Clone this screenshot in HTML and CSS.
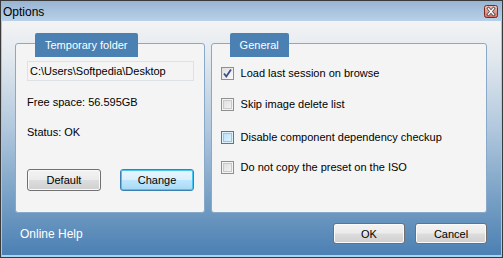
FILE: index.html
```html
<!DOCTYPE html>
<html>
<head>
<meta charset="utf-8">
<link rel="stylesheet" href="styles.css">
</head>
<body>
<div class="window">
  <div class="titlebar">
    <span class="title">Options</span>
    <span class="close">
      <svg width="14" height="13" viewBox="0 0 14 13">
        <defs>
          <linearGradient id="cg" x1="0" y1="0" x2="0" y2="1">
            <stop offset="0" stop-color="#f2c3bb"/>
            <stop offset="1" stop-color="#d36f62"/>
          </linearGradient>
        </defs>
        <rect x="0.5" y="0.5" width="13" height="12" rx="2" fill="url(#cg)" stroke="#7a2a22"/>
        <path d="M4.5 3.5 L9.5 9.5 M9.5 3.5 L4.5 9.5" stroke="#4a4a4a" stroke-width="3" stroke-linecap="square"/>
        <path d="M4.5 3.5 L9.5 9.5 M9.5 3.5 L4.5 9.5" stroke="#ffffff" stroke-width="1.4" stroke-linecap="square"/>
      </svg>
    </span>
  </div>
  <div class="client">
    <div class="panels">
      <div class="panel panel-left">
        <div class="tab">Temporary folder</div>
        <div class="pathbox">C:\Users\Softpedia\Desktop</div>
        <div class="info info-free">Free space: 56.595GB</div>
        <div class="info info-status">Status: OK</div>
        <div class="btnrow">
          <button class="btn">Default</button>
          <button class="btn btn-focus">Change</button>
        </div>
      </div>
      <div class="panel panel-right">
        <div class="tab">General</div>
        <label class="check row1"><span class="box checked">
          <svg width="11" height="11" viewBox="0 0 11 11"><path d="M2 5.5 L4.3 8.5 L9 1.5" fill="none" stroke="#3c4f8a" stroke-width="1.8"/></svg>
        </span>Load last session on browse</label>
        <label class="check row2"><span class="box"></span>Skip image delete list</label>
        <label class="check row3"><span class="box hover"></span>Disable component dependency checkup</label>
        <label class="check row4"><span class="box"></span>Do not copy the preset on the ISO</label>
      </div>
    </div>
    <div class="footer">
      <span class="help">Online Help</span>
      <div class="footer-btns">
        <button class="btn">OK</button>
        <button class="btn">Cancel</button>
      </div>
    </div>
  </div>
</div>
</body>
</html>
```
FILE: styles.css
```css
* { box-sizing: border-box; }
html, body { margin: 0; padding: 0; }
body {
  font-family: "Liberation Sans", Arial, sans-serif;
  font-size: 11px;
  color: #000;
  background: #fff;
}
.window {
  width: 503px;
  height: 258px;
  border: 1px solid #3a3a3a;
  display: flex;
  flex-direction: column;
  background: #a9c6e0;
}
.titlebar {
  height: 20px;
  display: flex;
  align-items: center;
  justify-content: space-between;
  padding: 0 4px 0 2px;
  background: linear-gradient(to bottom, #98b4d2 0%, #a9c3de 50%, #b8d0e8 100%);
}
.title {
  font-size: 12px;
  color: #000;
  padding-top: 1px;
}
.close {
  display: flex;
  margin-top: 1px;
}
.client {
  flex: 1;
  display: flex;
  flex-direction: column;
  margin: 0 1px 0 1px;
  padding: 12px 14px 0 13px;
  background: linear-gradient(to bottom, #f2f3f4 0%, #e3e9ef 15%, #b3c9de 45%, #7fa5c8 72%, #4b80b3 100%);
  border-bottom: 2px solid #a3d8f2;
}
.panels {
  display: flex;
  gap: 6px;
}
.panel {
  position: relative;
  margin-top: 10px;
  height: 170px;
  background: #f4f4f4;
  border: 1px solid #89a9c9;
  border-radius: 3px;
}
.panel-left {
  width: 190px;
  display: flex;
  flex-direction: column;
  padding: 17px 0 21px 11px;
}
.panel-right {
  width: 277px;
  padding: 22px 0 0 9px;
}
.tab {
  position: absolute;
  top: -11px;
  left: 19px;
  height: 24px;
  padding: 0 10px;
  display: flex;
  align-items: center;
  background: #4a80b2;
  color: #fff;
  border-radius: 2px 2px 0 0;
  font-size: 11px;
}
.panel-right .tab { left: 18px; }
.pathbox {
  width: 167px;
  height: 20px;
  border: 1px solid #dde2e8;
  padding: 0 0 0 2px;
  line-height: 18px;
  background: #f4f4f4;
}
.info { line-height: 14px; }
.info-free { margin-top: 14px; }
.info-status { margin-top: 16px; }
.btnrow {
  margin-top: auto;
  display: flex;
  gap: 19px;
}
.btn {
  font-family: "Liberation Sans", Arial, sans-serif;
  font-size: 11px;
  font-weight: normal;
  color: #000;
  width: 74px;
  height: 22px;
  padding: 0;
  border: 1px solid #707070;
  border-radius: 3px;
  background: linear-gradient(to bottom, #f3f3f3 0%, #ebebeb 48%, #dddddd 52%, #cfcfcf 100%);
  box-shadow: inset 0 0 0 1px #fafafa;
}
.btn-focus {
  border-color: #3c7fb1;
  box-shadow: inset 0 0 0 1px #48c6f4;
  background: linear-gradient(to bottom, #eaf6fd 0%, #d9f0fc 48%, #bee6fd 52%, #a7d9f5 100%);
}
.check {
  display: flex;
  align-items: center;
  gap: 7px;
  line-height: 14px;
  height: 14px;
}
.row2 { margin-top: 17px; }
.row3 { margin-top: 19px; }
.row4 { margin-top: 16px; }
.box {
  width: 13px;
  height: 13px;
  border: 1px solid #8e8f8f;
  background: linear-gradient(135deg, #dcdcdc 0%, #f6f6f6 100%);
  box-shadow: inset 0 0 0 1px #f4f4f4, inset 0 0 0 2px #c9c9c9;
  display: flex;
  align-items: center;
  justify-content: center;
}
.box.checked {
  box-shadow: none;
  background: linear-gradient(135deg, #dedede 0%, #fbfbfb 100%);
}
.box.hover {
  border-color: #3c7fb1;
  background: linear-gradient(135deg, #b5def8 0%, #e8f6fd 100%);
  box-shadow: inset 0 0 0 1px #def2fd, inset 0 0 0 2px #8ccaf2;
}
.footer {
  flex: 1;
  display: flex;
  align-items: center;
  justify-content: space-between;
  padding-left: 5px;
  padding-bottom: 1px;
}
.help {
  color: #fff;
  font-size: 12px;
}
.footer-btns {
  display: flex;
  gap: 10px;
}
.footer-btns .btn {
  width: 72px;
  height: 21px;
}
```
